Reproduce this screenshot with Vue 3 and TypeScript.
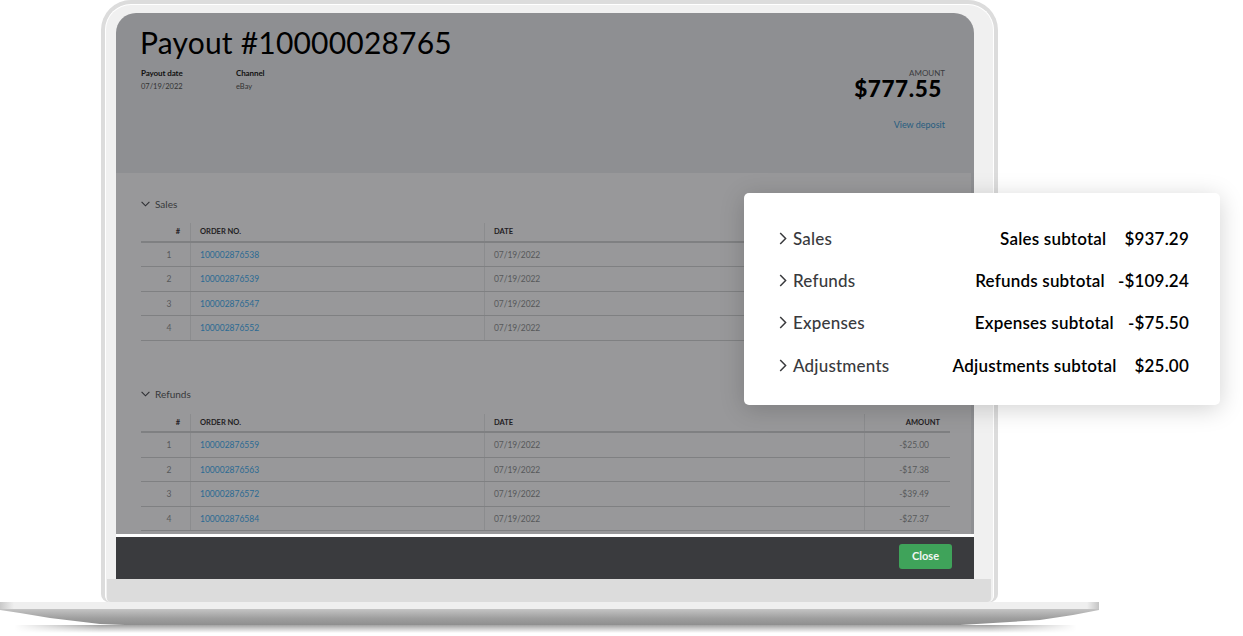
<script setup lang="ts">
interface Row { n: number; order: string; amount: string }
interface Section { title: string; rows: Row[]; gap: string }
const sections: Section[] = [
  { title: 'Sales', gap: 'first', rows: [
    { n: 1, order: '100002876538', amount: '' },
    { n: 2, order: '100002876539', amount: '' },
    { n: 3, order: '100002876547', amount: '' },
    { n: 4, order: '100002876552', amount: '' },
  ] },
  { title: 'Refunds', gap: 'next', rows: [
    { n: 1, order: '100002876559', amount: '-$25.00' },
    { n: 2, order: '100002876563', amount: '-$17.38' },
    { n: 3, order: '100002876572', amount: '-$39.49' },
    { n: 4, order: '100002876584', amount: '-$27.37' },
  ] },
]
const summary = [
  { label: 'Sales', sub: 'Sales subtotal', value: '$937.29', gap: 18 },
  { label: 'Refunds', sub: 'Refunds subtotal', value: '-$109.24', gap: 13 },
  { label: 'Expenses', sub: 'Expenses subtotal', value: '-$75.50', gap: 14 },
  { label: 'Adjustments', sub: 'Adjustments subtotal', value: '$25.00', gap: 18 },
]
</script>

<template>
  <div class="stage">
    <div class="lid">
      <div class="lid-inner">
        <div class="screen">
          <header class="head">
            <h1 class="title">Payout #10000028765</h1>
            <div class="meta">
              <div class="meta-col date-col">
                <div class="meta-k">Payout date</div>
                <div class="meta-v">07/19/2022</div>
              </div>
              <div class="meta-col">
                <div class="meta-k">Channel</div>
                <div class="meta-v">eBay</div>
              </div>
              <div class="total">
                <div class="total-k">AMOUNT</div>
                <div class="total-v">$777.55</div>
                <div class="total-l">View deposit</div>
              </div>
            </div>
          </header>
          <main class="body">
            <section v-for="s in sections" :key="s.title" class="section" :class="s.gap">
              <div class="sec-title">
                <svg class="chev" width="9" height="6" viewBox="0 0 9 6"><path d="M0.6 0.8 L4.5 4.8 L8.4 0.8" fill="none" stroke="#2e2f33" stroke-width="1.1"/></svg>
                <span>{{ s.title }}</span>
              </div>
              <div class="table">
                <div class="tr th">
                  <div class="c c1">#</div>
                  <div class="c c2">ORDER NO.</div>
                  <div class="c c3">DATE</div>
                  <div class="c c4">AMOUNT</div>
                </div>
                <div v-for="r in s.rows" :key="r.order" class="tr">
                  <div class="c c1 idx">{{ r.n }}</div>
                  <div class="c c2 link">{{ r.order }}</div>
                  <div class="c c3 muted">07/19/2022</div>
                  <div class="c c4 muted amt">{{ r.amount }}</div>
                </div>
              </div>
            </section>
          </main>
          <footer class="foot">
            <button class="close" type="button">Close</button>
          </footer>
        </div>
        <div class="chin"></div>
      </div>
    </div>
    <div class="base">
      <div class="base-top"></div>
      <div class="base-curve"></div>
      <div class="base-shadow"></div>
    </div>
    <aside class="card">
      <div v-for="i in summary" :key="i.label" class="card-row">
        <svg class="card-chev" width="8" height="13" viewBox="0 0 8 13"><path d="M1.2 1 L6.6 6.5 L1.2 12" fill="none" stroke="#393a3d" stroke-width="1.5"/></svg>
        <span class="card-label">{{ i.label }}</span>
        <span class="card-sub" :style="{ marginRight: i.gap + 'px' }">{{ i.sub }}</span>
        <span class="card-val">{{ i.value }}</span>
      </div>
    </aside>
  </div>
</template>

<style>
html, body { margin: 0; background: #fff; }
</style>

<style scoped>
.stage {
  position: relative;
  width: 1243px;
  height: 636px;
  overflow: hidden;
  background: #fff;
  font-family: Lato, "Noto Sans", sans-serif;
}
.lid {
  box-sizing: border-box;
  width: 897px;
  height: 602px;
  margin-left: 101px;
  border: solid #dcdcdc;
  border-width: 1px 4px 0;
  border-radius: 30px 30px 8px 8px;
  background: #dcdcdc;
  padding-top: 3px;
}
.lid-inner {
  box-sizing: border-box;
  height: 100%;
  background: #f0f0f0;
  border: solid #fff;
  border-width: 1px 1px 0;
  border-radius: 26px 26px 6px 6px;
  padding: 8px 0 0 10px;
  display: flex;
  flex-direction: column;
}
.screen {
  width: 858px;
  height: 566px;
  border-radius: 20px 20px 0 0;
  overflow: hidden;
  display: flex;
  flex-direction: column;
  background: #8e8f92;
}
.head {
  height: 160px;
  flex: none;
  box-sizing: border-box;
  padding: 10px 29px 0 24px;
  color: #000;
}
.title {
  margin: 0;
  font-size: 30px;
  line-height: 38px;
  font-weight: 400;
  letter-spacing: 0.2px;
}
.meta {
  display: flex;
  margin-top: 5px;
  padding-left: 1px;
}
.meta-col { font-size: 8px; line-height: 14px; }
.date-col { width: 95px; }
.meta-k { font-weight: 700; color: #111; letter-spacing: -0.1px; }
.meta-v { color: #333; font-size: 7.5px; }
.total {
  margin-left: auto;
  text-align: right;
  padding-top: 2px;
}
.total-k { font-size: 8px; line-height: 10px; color: #3b3c40; }
.total-v {
  font-size: 22.5px;
  line-height: 20px;
  font-weight: 900;
  margin: 1px 3px 0 0;
  letter-spacing: 0.6px;
}
.total-l { font-size: 9px; line-height: 12px; color: #275d80; margin-top: 20px; }
.body {
  height: 361px;
  flex: none;
  box-sizing: border-box;
  margin-right: 3px;
  padding: 0 21px 0 25px;
  background: #98989a;
  overflow: hidden;
  color: #393a3d;
}
.first { padding-top: 24px; }
.next { padding-top: 46px; }
.sec-title {
  display: flex;
  align-items: center;
  gap: 5px;
  font-size: 10px;
  line-height: 14px;
  color: #37383b;
  height: 14px;
}
.table { margin-top: 12px; }
.next .table { margin-top: 13px; }
.tr {
  display: grid;
  grid-template-columns: 49px 294px 380px 86px;
  height: 24.5px;
  box-sizing: border-box;
  border-bottom: 1px solid #7f8082;
  font-size: 8.5px;
  align-items: stretch;
}
.th {
  height: 19.5px;
  border-bottom: 2px solid #7f8082;
  font-size: 7.5px;
  font-weight: 700;
  color: #1f2023;
}
.c {
  display: flex;
  align-items: center;
  padding-left: 9px;
  border-left: 1px solid #8b8c8e;
  white-space: nowrap;
}
.c1 { border-left: 0; justify-content: flex-end; padding: 0 10px 0 0; }
.idx { justify-content: center; padding: 0 0 0 7px; color: #57585b; }
.c4 { justify-content: flex-end; padding: 0 10px 0 0; }
.amt { padding-right: 21px; }
.link { color: #2b6a93; }
.muted { color: #57585b; }
.c3.muted { letter-spacing: -0.1px; }
.tr:not(.th) .c { padding-top: 1px; }
.foot {
  box-sizing: border-box;
  flex: none;
  height: 45px;
  border-top: 3px solid #fff;
  background: #3a3b3e;
  display: flex;
  justify-content: flex-end;
  align-items: flex-start;
  padding: 7px 22px 0 0;
}
.close {
  width: 53px;
  height: 25px;
  border: 0;
  border-radius: 3px;
  background: #3fa35a;
  color: #f2f7f3;
  font-family: inherit;
  font-size: 11px;
  font-weight: 700;
  padding: 0 0 2px;
}
.chin {
  flex: 1;
  margin: 0 2px 0 -9px;
  background: #dcdcdc;
  border-radius: 0 0 4px 4px;
}
.base { width: 1099px; }
.base-top {
  height: 7px;
  background: linear-gradient(90deg, #c9c9c9 0, #efefef 14px, #efefef calc(100% - 12px), #c4c4c4 100%);
}
.base-curve {
  height: 17px;
  background: linear-gradient(180deg, #c4c4c4 0, #9e9e9e 55%, #8c8c8c 100%);
  clip-path: polygon(0 0, 1099px 0, 1099px 1px, 1073px 6px, 1040px 11px, 960px 16px, 900px 17px, 150px 17px, 100px 15px, 50px 9px, 20px 4px, 0 1px);
}
.base-shadow {
  height: 8px;
  margin: -1px 22px 0 14px;
  background: linear-gradient(180deg, #a2a2a2, #fff);
  mask-image: linear-gradient(90deg, transparent, #000 8%, #000 92%, transparent);
}
.card {
  position: absolute;
  left: 744px;
  top: 193px;
  width: 476px;
  height: 212px;
  box-sizing: border-box;
  background: #fff;
  border-radius: 5px;
  box-shadow: 0 4px 24px rgba(0, 0, 0, 0.18);
  padding: 24px 31px 0 34px;
  display: flex;
  flex-direction: column;
}
.card-row {
  display: flex;
  align-items: center;
  height: 42.4px;
  font-size: 17px;
  color: #000;
}
.card-chev { margin: 0 6px 0 1px; flex: none; }
.card-label { color: #393a3d; margin-right: auto; font-weight: 500; letter-spacing: 0.2px; }
.card-sub { font-weight: 600; letter-spacing: 0.2px; }
.card-val { font-weight: 600; letter-spacing: 0.2px; }
</style>
